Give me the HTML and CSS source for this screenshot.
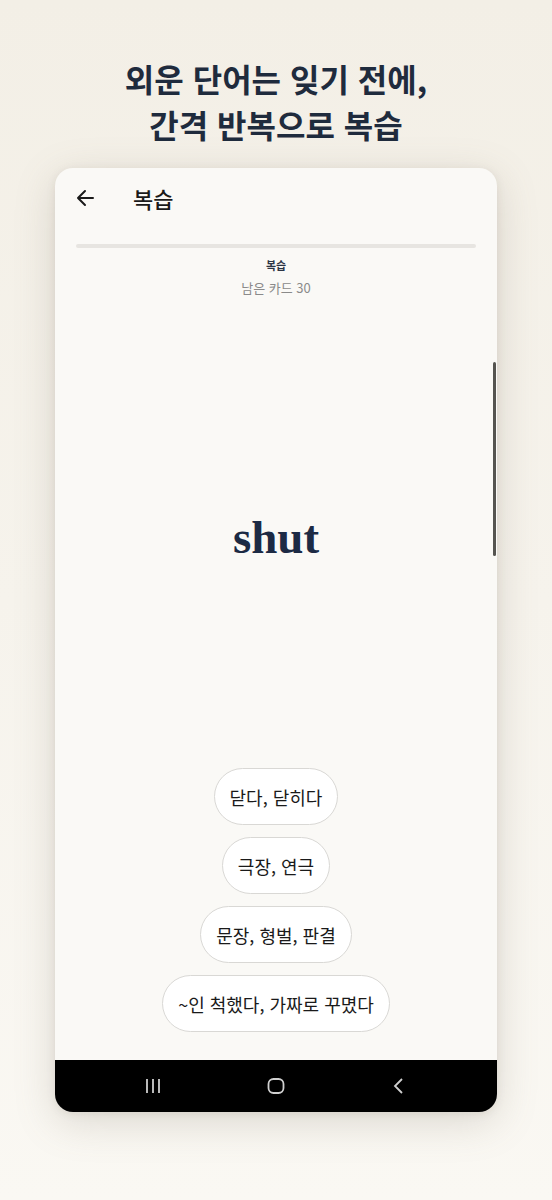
FILE: index.html
```html
<!DOCTYPE html>
<html lang="ko">
<head>
<meta charset="utf-8">
<link rel="stylesheet" href="styles.css">
</head>
<body>
<div class="page">
  <h1 class="headline">외운 단어는 잊기 전에,<br>간격 반복으로 복습</h1>
  <div class="phone">
    <div class="appbar">
      <svg class="back" width="20" height="20" viewBox="0 0 20 20"><path d="M18 10H3M10 3L3 10l7 7" fill="none" stroke="#1a1a1a" stroke-width="2" stroke-linecap="round" stroke-linejoin="round"/></svg>
      <span class="title">복습</span>
    </div>
    <div class="progress"></div>
    <div class="labels">
      <div class="mode">복습</div>
      <div class="remain">남은 카드 30</div>
    </div>
    <div class="content">
      <div class="word">shut</div>
      <div class="choices">
        <div class="chip">닫다, 닫히다</div>
        <div class="chip">극장, 연극</div>
        <div class="chip">문장, 형벌, 판결</div>
        <div class="chip">~인 척했다, 가짜로 꾸몄다</div>
      </div>
    </div>
    <div class="navbar">
      <svg width="20" height="18" viewBox="0 0 20 18"><path d="M4 2v14M10 2v14M16 2v14" stroke="#cfcfcf" stroke-width="1.8"/></svg>
      <svg width="20" height="18" viewBox="0 0 20 18"><rect x="2.5" y="2" width="15" height="14" rx="5" fill="none" stroke="#cfcfcf" stroke-width="1.8"/></svg>
      <svg width="20" height="18" viewBox="0 0 20 18"><path d="M13 2L6 9l7 7" fill="none" stroke="#cfcfcf" stroke-width="1.8"/></svg>
    </div>
    <div class="scrollbar"></div>
  </div>
</div>
</body>
</html>
```
FILE: styles.css
```css
html, body {
  margin: 0;
  padding: 0;
}
body {
  width: 552px;
  height: 1200px;
  background: linear-gradient(180deg, #f3efe6 0%, #f6f3ec 50%, #faf8f3 100%);
  font-family: "Noto Sans CJK KR", "Noto Sans", sans-serif;
  overflow: hidden;
}
.page {
  display: flex;
  flex-direction: column;
  align-items: center;
  padding-top: 55px;
}
.headline {
  margin: 0;
  font-size: 32px;
  line-height: 46px;
  font-weight: 700;
  color: #1f2b3d;
  text-align: center;
}
.phone {
  position: relative;
  margin-top: 21px;
  width: 442px;
  height: 944px;
  background: #faf9f6;
  border-radius: 18px;
  overflow: hidden;
  display: flex;
  flex-direction: column;
  box-shadow: 0 10px 40px rgba(120, 110, 90, 0.22), 0 2px 8px rgba(120, 110, 90, 0.12);
}
.appbar {
  height: 60px;
  display: flex;
  align-items: center;
  padding-left: 20px;
}
.back {
  display: block;
}
.title {
  margin-left: 38px;
  font-size: 22px;
  font-weight: 500;
  color: #1a1a1a;
}
.progress {
  margin: 16px 21px 0;
  height: 4px;
  border-radius: 2px;
  background: #e7e5e1;
}
.labels {
  text-align: center;
  margin-top: 8px;
}
.mode {
  font-size: 11px;
  line-height: 18px;
  font-weight: 700;
  color: #2c3444;
}
.remain {
  margin-top: 4px;
  font-size: 13px;
  line-height: 20px;
  color: #8a8a8a;
}
.content {
  flex: 1;
  display: flex;
  flex-direction: column;
  align-items: center;
}
.word {
  margin-top: 209px;
  font-family: "Liberation Serif", "DejaVu Serif", serif;
  font-weight: 700;
  font-size: 47px;
  line-height: 60px;
  color: #1c2a44;
}
.choices {
  margin-top: auto;
  padding-bottom: 28px;
  display: flex;
  flex-direction: column;
  align-items: center;
  gap: 12px;
}
.chip {
  height: 55px;
  padding: 0 15px;
  display: flex;
  align-items: center;
  border: 1px solid #d9d8d5;
  border-radius: 29px;
  background: #ffffff;
  font-size: 18px;
  color: #1a1a1a;
}
.navbar {
  height: 52px;
  background: #000;
  display: flex;
  align-items: center;
  justify-content: space-between;
  padding: 0 88px;
}
.navbar svg {
  display: block;
}
.scrollbar {
  position: absolute;
  right: 1px;
  top: 194px;
  width: 3px;
  height: 194px;
  border-radius: 2px;
  background: #555450;
}
```
